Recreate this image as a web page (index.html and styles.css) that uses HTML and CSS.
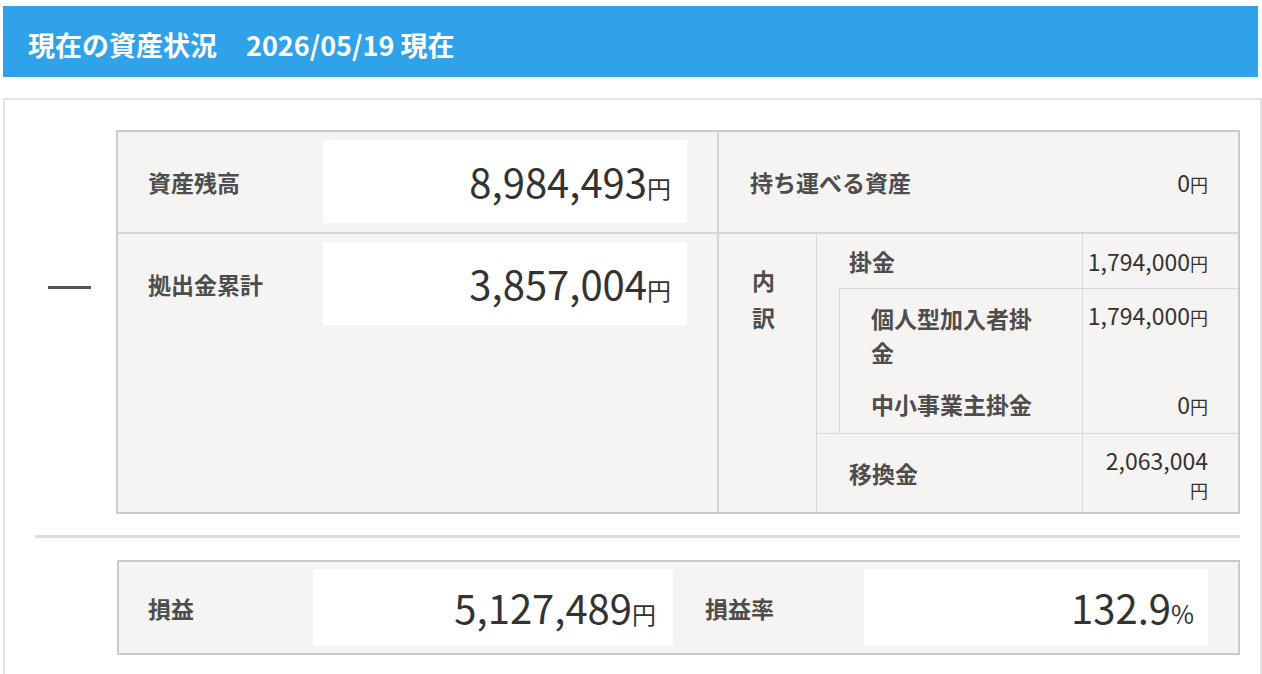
FILE: index.html
```html
<!DOCTYPE html>
<html lang="ja">
<head>
<meta charset="utf-8">
<title>現在の資産状況</title>
<link rel="stylesheet" href="styles.css">
</head>
<body>
<header class="title-bar">
  <span class="title">現在の資産状況</span><span class="date">2026/05/19 現在</span>
</header>
<section class="panel">
  <div class="top">
    <div class="toggle"><span class="dash"></span></div>
    <div class="main">
      <div class="cell left r1">
        <div class="label-col">資産残高</div>
        <div class="valbox"><span class="num">8,984,493</span><span class="unit">円</span></div>
      </div>
      <div class="cell right r1 portable">
        <span class="plabel">持ち運べる資産</span>
        <span class="sval">0<span class="u">円</span></span>
      </div>
      <div class="cell left r2">
        <div class="label-col">拠出金累計</div>
        <div class="valbox"><span class="num">3,857,004</span><span class="unit">円</span></div>
      </div>
      <div class="cell right r2 breakdown">
        <div class="uchiwake">内訳</div>
        <div class="items">
          <div class="row kakekin">
            <div class="ilabel">掛金</div>
            <div class="ival">1,794,000<span class="u">円</span></div>
          </div>
          <div class="sub">
            <div class="row sub-a">
              <div class="ilabel">個人型加入者掛金</div>
              <div class="ival">1,794,000<span class="u">円</span></div>
            </div>
            <div class="row sub-b">
              <div class="ilabel">中小事業主掛金</div>
              <div class="ival">0<span class="u">円</span></div>
            </div>
          </div>
          <div class="row ikan">
            <div class="ilabel">移換金</div>
            <div class="ival">2,063,004<br><span class="u">円</span></div>
          </div>
        </div>
      </div>
    </div>
  </div>
  <div class="sep"></div>
  <div class="bottom">
    <div class="blabel first">損益</div>
    <div class="bbox one"><span class="num">5,127,489</span><span class="unit">円</span></div>
    <div class="blabel second">損益率</div>
    <div class="bbox two"><span class="num">132.9</span><span class="unit pct">%</span></div>
  </div>
</section>
</body>
</html>
```
FILE: styles.css
```css
html, body {
  margin: 0;
  padding: 0;
  background: #ffffff;
}
body {
  font-family: "Noto Sans CJK JP", "Noto Sans", sans-serif;
  color: #333333;
  overflow: hidden;
}

.title-bar {
  margin: 6px 4px 0 3px;
  height: 71px;
  box-sizing: border-box;
  padding: 5px 0 0 25px;
  background: #30a2ea;
  color: #ffffff;
  display: flex;
  align-items: center;
  font-size: 27px;
  font-weight: 700;
  white-space: nowrap;
}
.date {
  margin-left: 29px;
}

.panel {
  margin: 21px 0 0 3px;
  border: 2px solid #e3e3e3;
  padding: 30px 20px 40px 0;
}

.top {
  display: flex;
}
.toggle {
  width: 111px;
  flex: none;
}
.dash {
  display: block;
  width: 43px;
  height: 3px;
  background: #555555;
  margin: 156px 0 0 43px;
}

.main {
  flex: 1;
  display: grid;
  grid-template-columns: 599px 1fr;
  border: 2px solid #cacaca;
  background: #f5f4f2;
}

.cell.left {
  display: flex;
  align-items: flex-start;
  padding: 8px 0 9px 0;
}
.cell.r2 {
  border-top: 2px solid #d6d6d6;
}
.cell.right {
  border-left: 2px solid #d6d6d6;
}

.label-col {
  width: 205px;
  height: 83px;
  box-sizing: border-box;
  padding-left: 30px;
  display: flex;
  align-items: center;
  font-size: 23px;
  font-weight: 700;
  color: #4d4d4d;
}

.valbox,
.bbox {
  height: 83px;
  background: #ffffff;
  box-sizing: border-box;
  text-align: right;
  line-height: 83px;
  white-space: nowrap;
}
.valbox {
  width: 364px;
  padding-right: 16px;
}
.num {
  font-size: 40px;
  color: #333333;
}
.unit {
  font-size: 24px;
  color: #333333;
}
.pct {
  font-size: 25px;
}

.portable {
  display: flex;
  align-items: center;
  justify-content: space-between;
  padding: 0 30px 0 31px;
}
.plabel {
  font-size: 23px;
  font-weight: 700;
  color: #4d4d4d;
}
.sval,
.ival {
  font-size: 23px;
  color: #333333;
}
.u {
  font-size: 18px;
  line-height: 18px;
}

.breakdown {
  display: flex;
}
.uchiwake {
  width: 98px;
  flex: none;
  box-sizing: border-box;
  padding: 28px 33px 0 33px;
  line-height: 37px;
  font-size: 23px;
  font-weight: 700;
  color: #4d4d4d;
  border-right: 1px solid #d8d8d8;
}
.items {
  flex: 1;
  display: flex;
  flex-direction: column;
}
.row {
  display: grid;
  grid-template-columns: 1fr 156px;
}
.ilabel {
  font-size: 23px;
  font-weight: 700;
  color: #4d4d4d;
  padding: 11px 32px 11px 32px;
  line-height: 32px;
}
.ival {
  border-left: 1px solid #d8d8d8;
  padding: 11px 30px 11px 0;
  line-height: 32px;
  text-align: right;
  white-space: nowrap;
}

.sub {
  margin-left: 22px;
  border-left: 1px solid #d8d8d8;
  border-top: 1px solid #d8d8d8;
}
.sub .ilabel {
  padding-left: 31px;
}
.sub-a .ilabel {
  padding-top: 12px;
  padding-bottom: 0;
  line-height: 34px;
}
.sub-a .ival {
  padding-top: 12px;
  padding-bottom: 0;
  line-height: 28px;
}
.sub-b .ilabel,
.sub-b .ival {
  padding-top: 18px;
  padding-bottom: 12px;
  line-height: 34px;
}

.ikan {
  border-top: 1px solid #d8d8d8;
}
.ikan .ilabel {
  align-self: center;
  padding-top: 0;
  padding-bottom: 0;
}
.ikan .ival {
  padding-top: 12px;
  padding-bottom: 10px;
  line-height: 28px;
}

.sep {
  height: 3px;
  background: #dcdcdc;
  margin: 21px 0 0 30px;
}

.bottom {
  margin: 22px 0 0 112px;
  border: 2px solid #cacaca;
  background: #f5f4f2;
  display: flex;
  align-items: center;
  padding: 7px 30px 7px 0;
}
.blabel {
  box-sizing: border-box;
  font-size: 23px;
  font-weight: 700;
  color: #4d4d4d;
}
.blabel.first {
  width: 194px;
  padding-left: 29px;
}
.blabel.second {
  width: 191px;
  padding-left: 32px;
}
.bbox {
  height: 77px;
  line-height: 77px;
}
.bbox.one {
  width: 360px;
  padding-right: 17px;
}
.bbox.two {
  width: 344px;
  padding-right: 14px;
}
```
